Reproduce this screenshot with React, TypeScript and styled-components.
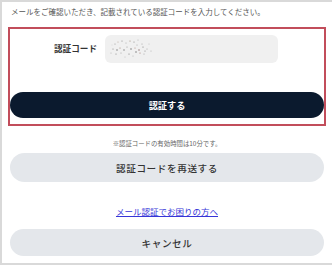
import React from "react";
import styled, { createGlobalStyle } from "styled-components";

const Global = createGlobalStyle`
  html, body { margin: 0; padding: 0; background: #ffffff; }
  body { font-family: "Noto Sans CJK JP", "Noto Sans", sans-serif; }
  * { box-sizing: border-box; }
`;

const Frame = styled.div`
  width: 332px;
  height: 265px;
  border-top: 2px solid #d9d9d9;
  border-left: 2px solid #d9d9d9;
  border-bottom: 2px solid #d9d9d9;
  padding: 0 6px 0 6px;
  display: flex;
  flex-direction: column;
`;

const Intro = styled.p`
  margin: 4px 0 0 3px;
  font-size: 7.5px;
  line-height: 12px;
  color: #555;
  white-space: nowrap;
`;

const Highlight = styled.div`
  margin-top: 9px;
  height: 99px;
  border: 2px solid #c24d5b;
  padding-top: 6px;
  display: flex;
  flex-direction: column;
`;

const Row = styled.div`
  display: flex;
  align-items: center;
  padding-left: 44px;
  gap: 7px;
`;

const Label = styled.span`
  width: 44px;
  font-size: 8.6px;
  font-weight: 700;
  color: #333;
  white-space: nowrap;
  margin-top: -2px;
`;

const CodeBox = styled.div`
  width: 173px;
  height: 28px;
  background: #f0f0f0;
  border-radius: 6px;
  display: flex;
  align-items: center;
  padding-left: 4px;
`;

const Button = styled.button<{ $variant: "dark" | "light"; $h: number }>`
  display: flex;
  align-items: center;
  justify-content: center;
  height: ${(p) => p.$h}px;
  border: none;
  border-radius: 999px;
  font-family: "Noto Sans CJK JP", "Noto Sans", sans-serif;
  width: 100%;
  padding: 0;
  background: ${(p) => (p.$variant === "dark" ? "#0b1a2e" : "#e4e7eb")};
  color: ${(p) => (p.$variant === "dark" ? "#ffffff" : "#333333")};
  font-weight: ${(p) => (p.$variant === "dark" ? 700 : 500)};
  font-size: ${(p) => (p.$variant === "dark" ? "9.2px" : "9.6px")};
  letter-spacing: ${(p) => (p.$variant === "dark" ? "0" : "0.6px")};
`;

const PrimaryWrap = styled.div`
  margin-top: 29px;
`;

const Note = styled.p`
  margin: 13px 0 0;
  text-align: center;
  font-size: 6.4px;
  line-height: 10px;
  color: #666;
`;

const Outer = styled.div<{ $mt: number }>`
  margin: ${(p) => p.$mt}px 2px 0;
`;

const LinkRow = styled.div`
  margin-top: 20px;
  text-align: center;
  line-height: 12px;
`;

const HelpLink = styled.a`
  font-size: 8.5px;
  color: #3535d8;
  text-decoration: underline;
`;

const dots: [number, number, number, string][] = [
  [6, 6, 0.6, "#9a9a9a"], [9, 4, 0.5, "#b0a090"], [13, 3, 0.6, "#8a8a8a"], [17, 5, 0.5, "#a0a0a0"],
  [21, 3, 0.6, "#9c8a7a"], [25, 4, 0.5, "#777"], [29, 2, 0.5, "#aaa"], [33, 6, 0.5, "#999"],
  [4, 11, 0.6, "#8c8c8c"], [8, 12, 0.7, "#6e6e6e"], [11, 10, 0.6, "#a08878"], [15, 12, 0.7, "#777"],
  [18, 9, 0.6, "#999"], [22, 11, 0.7, "#6a6a6a"], [26, 10, 0.6, "#b08a80"], [30, 12, 0.7, "#8a6a6a"],
  [34, 9, 0.6, "#7a7a7a"], [38, 11, 0.5, "#999"], [42, 13, 0.5, "#aaa"], [2, 15, 0.5, "#aaa"],
  [7, 16, 0.6, "#888"], [12, 15, 0.5, "#999"], [20, 16, 0.6, "#7a7a7a"], [27, 14, 0.7, "#6a6a6a"],
  [31, 15, 0.6, "#a07a70"], [35, 16, 0.5, "#999"], [24, 18, 0.5, "#aaa"], [16, 19, 0.5, "#bbb"],
  [40, 6, 0.5, "#bbb"], [3, 7, 0.4, "#bbb"], [28, 7, 0.5, "#999"], [36, 13, 0.6, "#888"],
];

const Noise = () => (
  <svg width="46" height="22" viewBox="0 0 46 22">
    {dots.map(([x, y, r, c], i) => (
      <circle key={i} cx={x} cy={y} r={r} fill={c} />
    ))}
  </svg>
);

export default function App() {
  return (
    <>
      <Global />
      <Frame>
        <Intro>メールをご確認いただき、記載されている認証コードを入力してください。</Intro>
        <Highlight>
          <Row>
            <Label>認証コード</Label>
            <CodeBox>
              <Noise />
            </CodeBox>
          </Row>
          <PrimaryWrap>
            <Button $variant="dark" $h={26}>認証する</Button>
          </PrimaryWrap>
        </Highlight>
        <Note>※認証コードの有効時間は10分です。</Note>
        <Outer $mt={4}>
          <Button $variant="light" $h={29}>認証コードを再送する</Button>
        </Outer>
        <LinkRow>
          <HelpLink href="#">メール認証でお困りの方へ</HelpLink>
        </LinkRow>
        <Outer $mt={12}>
          <Button $variant="light" $h={27}>キャンセル</Button>
        </Outer>
      </Frame>
    </>
  );
}
